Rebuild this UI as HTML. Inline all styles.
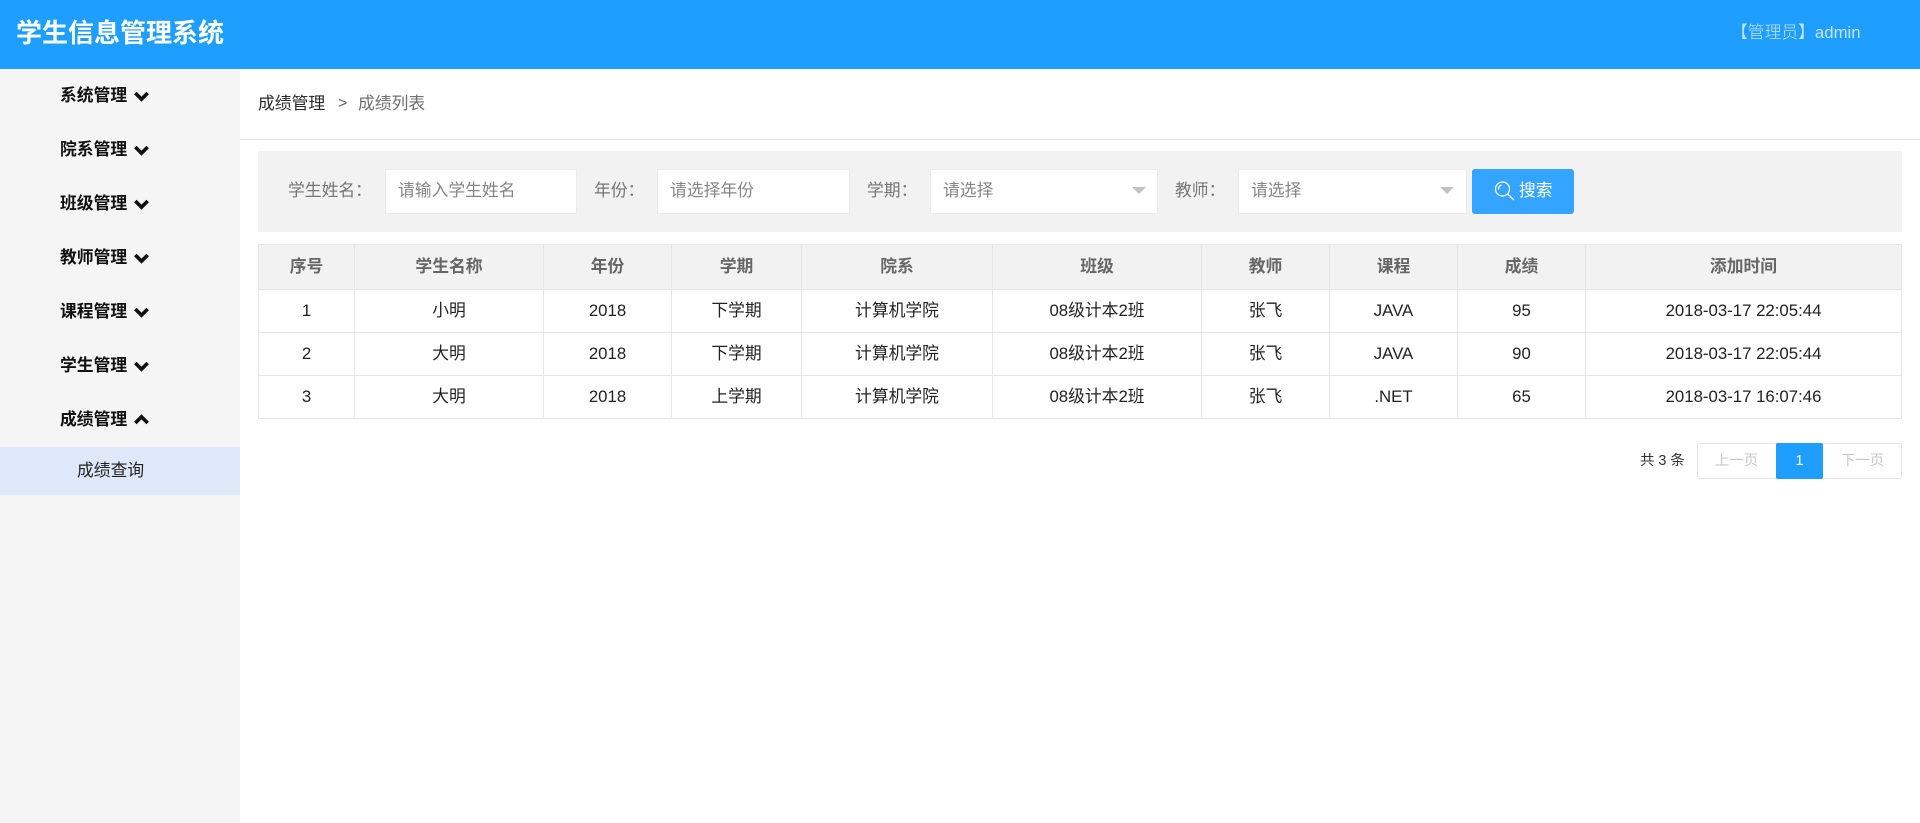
<!DOCTYPE html>
<html lang="zh-CN">
<head>
<meta charset="utf-8">
<title>学生信息管理系统</title>
<style>
html,body{margin:0;padding:0;width:1920px;height:823px;overflow:hidden;background:#fff;}
body{position:relative;font-family:"Liberation Sans","Noto Sans CJK SC",sans-serif;font-size:16.8px;color:#1a1a1a;}
.a{position:absolute;white-space:nowrap;box-sizing:border-box;}
.hd{left:0;top:0;width:1920px;height:69px;background:#1e9eff;}
.title{left:16px;top:14px;height:38px;line-height:38px;font-size:26px;font-weight:700;color:#fff;}
.admin{left:1731px;top:18px;height:30px;line-height:30px;color:#c4e4ff;font-weight:300;}
.side{left:0;top:69px;width:240px;height:754px;background:#f5f5f5;}
.mi{left:60px;height:54px;line-height:54px;font-weight:700;color:#111;}
.chev{position:absolute;left:134px;width:15px;height:12px;}
.sub{left:0;top:447px;width:240px;height:48px;line-height:47px;background:#dfe8f9;padding-left:77px;color:#222;}
.bc1{left:258px;top:89px;height:30px;line-height:30px;color:#2a2a2a;}
.bc2{left:338px;top:89px;height:30px;line-height:30px;color:#666;font-size:16px;}
.bc3{left:358px;top:89px;height:30px;line-height:30px;color:#707070;}
.hr{left:240px;top:139px;width:1680px;height:1px;background:#e6e6e6;}
.search{left:258px;top:151px;width:1644px;height:81px;background:#f2f2f2;}
.lb{top:175px;height:32px;line-height:32px;color:#757575;}
.ip{top:169px;height:45px;background:#fff;border:1px solid #ebebeb;border-radius:2px;line-height:41px;color:#858585;padding-left:12px;}
.tri{position:absolute;top:187px;width:0;height:0;border-left:7px solid transparent;border-right:7px solid transparent;border-top:7px solid #c2c2c2;}
.btn{left:1472px;top:169px;width:102px;height:45px;background:#33a4ff;border-radius:3px;}
.btnt{left:1519px;top:175px;height:32px;line-height:32px;color:#fff;}
table{position:absolute;left:258px;top:244px;width:1643px;border-collapse:collapse;table-layout:fixed;}
th,td{border:1px solid #e6e6e6;text-align:center;padding:0;font-size:16.8px;line-height:20px;}
th{height:44px;background:#f2f2f2;color:#666;font-weight:700;}
td{height:42px;color:#222;font-weight:400;}
.pgt{left:1640px;top:446px;height:30px;line-height:30px;font-size:14.4px;color:#333;}
.pg{left:1697px;top:443px;width:205px;height:36px;border:1px solid #e6e6e6;border-radius:2px;}
.pgp{top:443px;height:36px;line-height:36px;font-size:14.4px;color:#c8c8c8;text-align:center;}
.pga{left:1776px;top:443px;width:47px;height:36px;line-height:36px;background:#1e9eff;color:#fff;font-size:14.4px;text-align:center;border-radius:2px;}
</style>
</head>
<body>
<div class="a hd"></div>
<div class="a title">学生信息管理系统</div>
<div class="a admin">【管理员】admin</div>

<div class="a side"></div>
<div class="a mi" style="top:69px">系统管理</div>
<div class="a mi" style="top:123px">院系管理</div>
<div class="a mi" style="top:177px">班级管理</div>
<div class="a mi" style="top:231px">教师管理</div>
<div class="a mi" style="top:285px">课程管理</div>
<div class="a mi" style="top:339px">学生管理</div>
<div class="a mi" style="top:393px">成绩管理</div>
<svg class="chev" style="top:90px" viewBox="0 0 15 12"><path d="M1.3 3 7.5 9.2 13.7 3" fill="none" stroke="#111" stroke-width="3.6"/></svg>
<svg class="chev" style="top:144px" viewBox="0 0 15 12"><path d="M1.3 3 7.5 9.2 13.7 3" fill="none" stroke="#111" stroke-width="3.6"/></svg>
<svg class="chev" style="top:198px" viewBox="0 0 15 12"><path d="M1.3 3 7.5 9.2 13.7 3" fill="none" stroke="#111" stroke-width="3.6"/></svg>
<svg class="chev" style="top:252px" viewBox="0 0 15 12"><path d="M1.3 3 7.5 9.2 13.7 3" fill="none" stroke="#111" stroke-width="3.6"/></svg>
<svg class="chev" style="top:306px" viewBox="0 0 15 12"><path d="M1.3 3 7.5 9.2 13.7 3" fill="none" stroke="#111" stroke-width="3.6"/></svg>
<svg class="chev" style="top:360px" viewBox="0 0 15 12"><path d="M1.3 3 7.5 9.2 13.7 3" fill="none" stroke="#111" stroke-width="3.6"/></svg>
<svg class="chev" style="top:414px" viewBox="0 0 15 12"><path d="M1.3 9 7.5 2.8 13.7 9" fill="none" stroke="#111" stroke-width="3.6"/></svg>
<div class="a sub">成绩查询</div>

<div class="a bc1">成绩管理</div>
<div class="a bc2">&gt;</div>
<div class="a bc3">成绩列表</div>
<div class="a hr"></div>

<div class="a search"></div>
<div class="a lb" style="left:288px">学生姓名：</div>
<div class="a ip" style="left:385px;width:192px">请输入学生姓名</div>
<div class="a lb" style="left:594px">年份：</div>
<div class="a ip" style="left:657px;width:193px">请选择年份</div>
<div class="a lb" style="left:867px">学期：</div>
<div class="a ip" style="left:930px;width:228px">请选择</div>
<div class="tri" style="left:1132px"></div>
<div class="a lb" style="left:1175px">教师：</div>
<div class="a ip" style="left:1238px;width:229px">请选择</div>
<div class="tri" style="left:1440px"></div>
<div class="a btn"></div>
<svg class="a" style="left:1494px;top:180px" width="22" height="22" viewBox="0 0 22 22"><circle cx="8.5" cy="9" r="7" fill="none" stroke="#fff" stroke-width="1.2"/><path d="M4.5 9.5C4.5 7.5 5.5 5.5 7.5 5M13.5 14l6.5 6" fill="none" stroke="#fff" stroke-width="1.4"/></svg>
<div class="a btnt">搜索</div>

<table>
<colgroup><col style="width:96px"><col style="width:189px"><col style="width:128px"><col style="width:130px"><col style="width:191px"><col style="width:209px"><col style="width:128px"><col style="width:128px"><col style="width:128px"><col style="width:316px"></colgroup>
<tr><th>序号</th><th>学生名称</th><th>年份</th><th>学期</th><th>院系</th><th>班级</th><th>教师</th><th>课程</th><th>成绩</th><th>添加时间</th></tr>
<tr><td>1</td><td>小明</td><td>2018</td><td>下学期</td><td>计算机学院</td><td>08级计本2班</td><td>张飞</td><td>JAVA</td><td>95</td><td>2018-03-17 22:05:44</td></tr>
<tr><td>2</td><td>大明</td><td>2018</td><td>下学期</td><td>计算机学院</td><td>08级计本2班</td><td>张飞</td><td>JAVA</td><td>90</td><td>2018-03-17 22:05:44</td></tr>
<tr><td>3</td><td>大明</td><td>2018</td><td>上学期</td><td>计算机学院</td><td>08级计本2班</td><td>张飞</td><td>.NET</td><td>65</td><td>2018-03-17 16:07:46</td></tr>
</table>

<div class="a pgt">共 3 条</div>
<div class="a pg"></div>
<div class="a pgp" style="left:1697px;width:79px">上一页</div>
<div class="a pga">1</div>
<div class="a pgp" style="left:1823px;width:79px">下一页</div>
</body>
</html>
